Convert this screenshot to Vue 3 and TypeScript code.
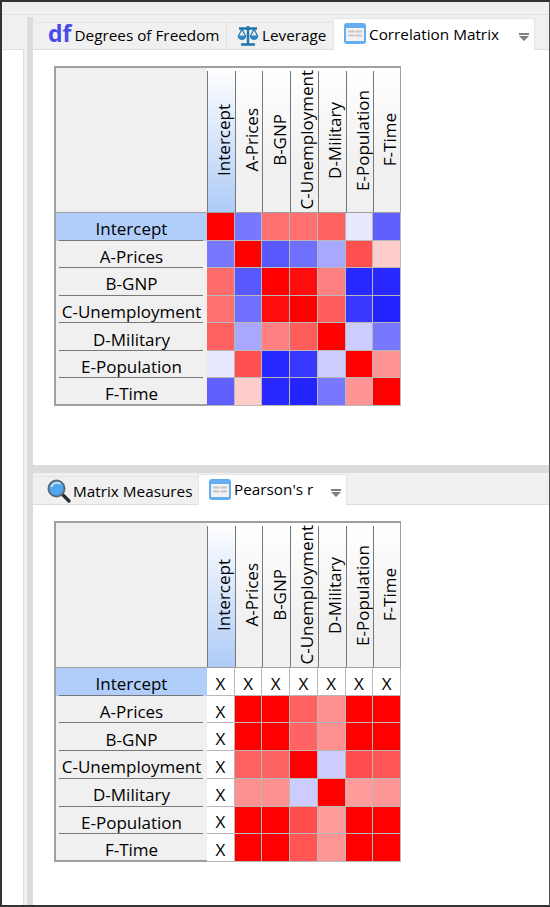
<script setup lang="ts">
const labels = ['Intercept', 'A-Prices', 'B-GNP', 'C-Unemployment', 'D-Military', 'E-Population', 'F-Time']

const red = '#ff0000'
const correlation: string[][] = [
  [red, '#7878ff', '#ff7070', '#ff7070', '#ff6060', '#e8e8ff', '#6060ff'],
  ['#7878ff', red, '#5858ff', '#7070ff', '#a8a8ff', '#ff5050', '#ffcccc'],
  ['#ff6c6c', '#5858ff', red, '#ff0c0c', '#ff8080', '#2828ff', '#2828ff'],
  ['#ff7070', '#7070ff', '#ff0c0c', red, '#ff5c5c', '#3838ff', '#2424ff'],
  ['#ff6060', '#a8a8ff', '#ff8080', '#ff5c5c', red, '#ccccff', '#7878ff'],
  ['#e8e8ff', '#ff5050', '#2828ff', '#3838ff', '#ccccff', red, '#ff9494'],
  ['#6060ff', '#ffcccc', '#2828ff', '#2424ff', '#7878ff', '#ff9494', red],
]

// empty string = no value, shown as X
const pearson: string[][] = [
  ['', '', '', '', '', '', ''],
  ['', red, red, '#ff6060', '#ff9090', red, red],
  ['', red, red, '#ff6464', '#ff9090', red, red],
  ['', '#ff6060', '#ff6464', red, '#ccccff', '#ff4c4c', '#ff5555'],
  ['', '#ff9090', '#ff9090', '#ccccff', red, '#ff9c9c', '#ff9696'],
  ['', red, red, '#ff4c4c', '#ff9c9c', red, red],
  ['', red, red, '#ff5555', '#ff9696', red, red],
]

const matrices = [correlation, pearson]
</script>

<template>
  <div class="window">
    <div class="topbar"></div>
    <div class="body">
      <div class="side">
        <div class="side-head"></div>
        <div class="side-pane"></div>
      </div>
      <div class="sash-v"></div>
      <div class="panels">
        <section class="pane pane-top">
          <div class="tabs">
            <div class="tab tab-df">
              <span class="df">df</span>
              <span>Degrees of Freedom</span>
            </div>
            <div class="tab tab-lev">
              <svg class="icon" width="22" height="21" viewBox="0 0 22 21">
                <g fill="none" stroke="#1f74ad">
                  <path stroke-width="2.4" d="M11 1v18M4 19.5h14M2 3.5h18" />
                  <path stroke-width="1.2" d="M5 4 1.5 11M5 4l3.5 7M17 4l-3.5 7M17 4l3.5 7" />
                </g>
                <path fill="#2f86c2" d="M0.5 10.5h9a4.5 4.5 0 0 1-9 0ZM12.5 10.5h9a4.5 4.5 0 0 1-9 0Z" />
              </svg>
              <span>Leverage</span>
            </div>
            <div class="tab tab-active tab-corr">
              <svg class="icon" width="22" height="21" viewBox="0 0 22 21">
                <rect width="22" height="21" rx="3" fill="#63adf0" />
                <rect x="2" y="5" width="18" height="13" fill="#f2f2f2" />
                <path fill="#c6c6c6" d="M4 7.5h6.5v2H4zM11.5 7.5H18v2h-6.5zM4 11.5h6.5v2H4zM11.5 11.5H18v2h-6.5z" />
              </svg>
              <span>Correlation Matrix</span>
              <svg class="menu" width="10" height="8" viewBox="0 0 10 8">
                <path fill="#808080" d="M0 0h10v2H0zM0 3h10L5 8Z" />
              </svg>
            </div>
            <div class="tabs-rest"></div>
          </div>
          <div class="content">
            <div class="matrix">
              <div class="corner"></div>
              <div
                v-for="(name, c) in labels"
                :key="name"
                class="col-head"
                :class="{ selected: c === 0 }"
              >
                <span>{{ name }}</span>
              </div>
              <template v-for="(row, r) in matrices[0]" :key="r">
                <div class="row-head" :class="{ selected: r === 0, last: r === 6 }">{{ labels[r] }}</div>
                <div
                  v-for="(color, c) in row"
                  :key="c"
                  class="cell"
                  :style="{ background: color }"
                ></div>
              </template>
            </div>
          </div>
        </section>

        <div class="sash-h"></div>

        <section class="pane pane-bottom">
          <div class="tabs">
            <div class="tab tab-mm">
              <svg class="icon" width="24" height="24" viewBox="0 0 24 24">
                <path d="M15 15l7 7" stroke="#242d35" stroke-width="3.2" stroke-linecap="round" />
                <circle cx="9.5" cy="9.5" r="8" fill="#4fa6ee" stroke="#5d6a75" stroke-width="2" />
                <path d="M4.5 8a5.5 5 0 0 1 9-3" fill="none" stroke="#bfe2fb" stroke-width="2" />
              </svg>
              <span>Matrix Measures</span>
            </div>
            <div class="tab tab-active tab-pearson">
              <svg class="icon" width="22" height="21" viewBox="0 0 22 21">
                <rect width="22" height="21" rx="3" fill="#63adf0" />
                <rect x="2" y="5" width="18" height="13" fill="#f2f2f2" />
                <path fill="#c6c6c6" d="M4 7.5h6.5v2H4zM11.5 7.5H18v2h-6.5zM4 11.5h6.5v2H4zM11.5 11.5H18v2h-6.5z" />
              </svg>
              <span>Pearson's r</span>
              <svg class="menu" width="10" height="8" viewBox="0 0 10 8">
                <path fill="#808080" d="M0 0h10v2H0zM0 3h10L5 8Z" />
              </svg>
            </div>
            <div class="tabs-rest"></div>
          </div>
          <div class="content">
            <div class="matrix matrix-tall">
              <div class="corner"></div>
              <div
                v-for="(name, c) in labels"
                :key="name"
                class="col-head"
                :class="{ selected: c === 0 }"
              >
                <span>{{ name }}</span>
              </div>
              <template v-for="(row, r) in matrices[1]" :key="r">
                <div class="row-head" :class="{ selected: r === 0, last: r === 6 }">{{ labels[r] }}</div>
                <div
                  v-for="(color, c) in row"
                  :key="c"
                  class="cell"
                  :style="{ background: color || '#fff' }"
                >{{ color ? '' : 'X' }}</div>
              </template>
            </div>
          </div>
        </section>
      </div>
    </div>
  </div>
</template>

<style scoped>
.window {
  width: 550px;
  height: 907px;
  box-sizing: border-box;
  border-top: 2px solid #333;
  border-left: 2px solid #333;
  border-right: 1px solid #555;
  border-bottom: 2px solid #333;
  display: flex;
  flex-direction: column;
  background: #f0f0f0;
  font-family: "Open Sans", "Noto Sans", sans-serif;
  font-size: 17px;
  color: #000;
}
.topbar {
  height: 13px;
  border-bottom: 1px solid #e0e0e0;
  box-sizing: border-box;
  flex-shrink: 0;
}
.body {
  flex: 1;
  display: flex;
  min-height: 0;
}
.side {
  width: 22px;
  display: flex;
  flex-direction: column;
  flex-shrink: 0;
}
.side-head {
  height: 34px;
}
.side-pane {
  flex: 1;
  background: #fff;
  border-top: 1px solid #e0e0e0;
  border-right: 1px solid #dcdcdc;
}
.sash-v {
  width: 9px;
  flex-shrink: 0;
  box-sizing: border-box;
  margin-top: 2px;
  border-left: 3px solid #f0f0f0;
  background: #dcdcdc;
}
.panels {
  flex: 1;
  display: flex;
  flex-direction: column;
  min-width: 0;
}
.pane {
  display: flex;
  flex-direction: column;
}
.pane-top {
  height: 450px;
  padding-top: 3px;
  box-sizing: border-box;
}
.pane-bottom {
  flex: 1;
  padding-top: 1px;
}
.pane-bottom .tabs {
  height: 31px;
}
.sash-h {
  height: 8px;
  background: #dcdcdc;
  flex-shrink: 0;
}
.tabs {
  display: flex;
  height: 32px;
  flex-shrink: 0;
  background: #f0f0f0;
  box-shadow: inset 0 -1px #dedede;
  font-size: 15.3px;
}
.tab {
  display: flex;
  align-items: center;
  box-sizing: border-box;
  margin-top: 4px;
  height: calc(100% - 4px);
  white-space: nowrap;
  border-top: 1px solid #e4e4e4;
}
.tab-df {
  width: 190px;
  margin-left: 4px;
  padding-left: 11px;
  padding-bottom: 3px;
  gap: 3px;
  border-right: 1px solid #dedede;
}
.tab-lev {
  width: 106px;
  padding-left: 10px;
  padding-bottom: 3px;
  gap: 3px;
}
.tab-mm {
  width: 161px;
  margin-top: 2px;
  height: calc(100% - 2px);
  margin-left: 4px;
  padding-left: 10px;
  gap: 2px;
}
.tab-active {
  margin-top: 0;
  height: 100%;
  background: #fff;
  border: 1px solid #e4e4e4;
  border-bottom: 0;
  padding-bottom: 2px;
  position: relative;
  gap: 3px;
}
.tab-corr {
  width: 202px;
  padding-left: 10px;
}
.tab-pearson {
  width: 149px;
  padding-left: 10px;
}
.menu {
  position: absolute;
  right: 5px;
  top: 14px;
}
.tabs-rest {
  flex: 1;
}
.df {
  font-size: 23px;
  font-weight: 700;
  color: #4a4ae8;
  line-height: 1;
  margin-top: -3px;
}
.icon {
  flex-shrink: 0;
}
.content {
  flex: 1;
  background: #fff;
  padding: 16px 0 0 21px;
}
.matrix {
  width: 347px;
  height: 340px;
  box-sizing: border-box;
  display: grid;
  grid-template-columns: 153px repeat(7, 1fr);
  grid-template-rows: 147px repeat(7, 1fr);
}
.matrix-tall {
  height: 341px;
}
.corner {
  background: #f0f0f0;
  border-top: 2px solid #a0a0a0;
  border-left: 2px solid #a0a0a0;
  border-bottom: 1px solid #a0a0a0;
}
.col-head {
  display: flex;
  align-items: center;
  justify-content: center;
  padding-left: 6px;
  position: relative;
  border-top: 2px solid #a0a0a0;
  border-bottom: 1px solid #a0a0a0;
  background: linear-gradient(#fff, #f0f0f0 70%);
  min-height: 0;
  min-width: 0;
}
.col-head:nth-child(8) {
  border-right: 1px solid #a0a0a0;
}
.col-head::before {
  content: "";
  position: absolute;
  left: 0;
  top: 3px;
  bottom: 0;
  width: 1px;
  background: #777;
}
.col-head.selected {
  background: linear-gradient(#fff, #aecbf7);
}
.col-head span {
  writing-mode: vertical-rl;
  transform: rotate(180deg);
  white-space: nowrap;
  line-height: 1;
}
.row-head {
  display: flex;
  align-items: center;
  justify-content: center;
  position: relative;
  padding-top: 4px;
  background: #f0f0f0;
  border-left: 2px solid #a0a0a0;
  white-space: nowrap;
  min-height: 0;
}
.row-head::after {
  content: "";
  position: absolute;
  left: 3px;
  right: 4px;
  bottom: 0;
  height: 1px;
  background: #777;
}
.row-head.selected {
  background: #b1cefa;
}
.row-head.last {
  border-bottom: 2px solid #a0a0a0;
}
.row-head.last::after {
  display: none;
}
.cell {
  box-sizing: border-box;
  border-right: 1px solid #b8b8b8;
  border-bottom: 1px solid #b8b8b8;
  display: flex;
  align-items: center;
  justify-content: center;
  padding-top: 4px;
  min-height: 0;
  min-width: 0;
}
</style>
